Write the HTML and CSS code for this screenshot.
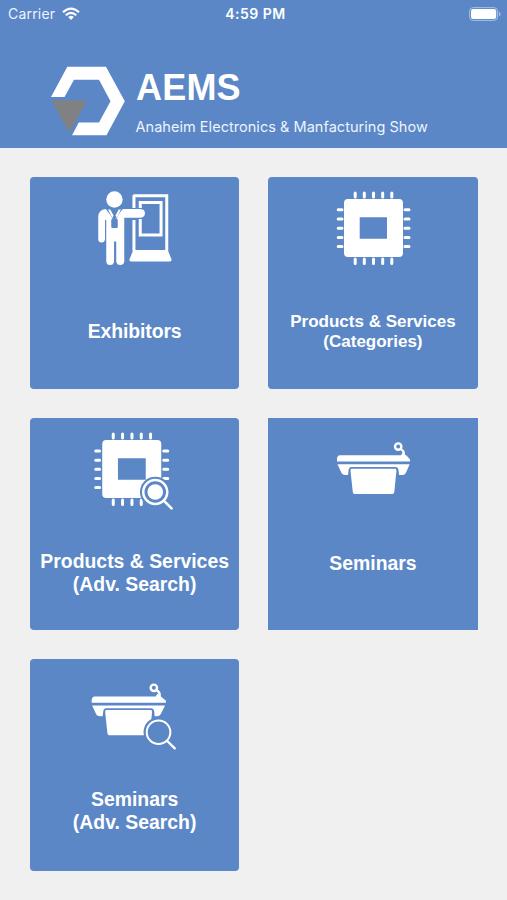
FILE: index.html
```html
<!DOCTYPE html>
<html lang="en">
<head>
<meta charset="utf-8">
<title>AEMS</title>
<link rel="stylesheet" href="styles.css">
</head>
<body>
<header class="header">
  <div class="status">
    <div class="carrier"><span>Carrier</span>
      <svg class="wifi" width="18" height="14" viewBox="0 0 18 14"><g fill="none" stroke="#fff" stroke-width="2.2"><path d="M1 5.2Q9-2 17 5.2"/><path d="M3.8 8.2Q9 3.5 14.2 8.2"/></g><path d="M9 12.9 6.2 9.9Q9 7.7 11.8 9.9Z" fill="#fff"/></svg>
    </div>
    <div class="time">4:59 PM</div>
    <svg class="battery" width="32" height="14" viewBox="0 0 32 14"><rect x=".6" y=".6" width="28" height="12.8" rx="3.6" fill="none" stroke="#a9c0e3" stroke-width="1"/><rect x="2" y="2" width="25.2" height="10" rx="2.2" fill="#fff"/><path d="M30 4.7Q31.6 5.2 31.6 7T30 9.3Z" fill="#a9c0e3"/></svg>
  </div>
  <div class="brand">
    <svg class="logo" width="76" height="72" viewBox="50 65 76 72"><path d="M51 97 67.3 66.8H106L124.8 101.3 106.5 135.3H72L78.8 122.5H99L110.5 101.3 99 79.7H74L64.5 97Z" fill="#fff"/><path d="M51.7 100.3H87L69.3 133Z" fill="#808183"/></svg>
    <div class="titles">
      <h1>AEMS</h1>
      <p>Anaheim Electronics &amp; Manfacturing Show</p>
    </div>
  </div>
</header>
<main class="grid">
  <a class="tile">
    <svg class="icon" viewBox="-.25 2 100 98">
      <g fill="none" stroke="#fff">
        <path d="M48.7 33V21Q48.7 20.7 49 20.7H81.5V76M48.7 45V76" stroke-width="3"/>
        <path d="M55 33V27.5H75.8V60H55V44" stroke-width="3"/>
      </g>
      <path d="M48 75H82.5L86.3 84.5Q86.5 86.5 84.5 86.5H46Q43.8 86.5 44.2 84.5Z" fill="#fff"/>
      <circle cx="29.2" cy="24.5" r="8.2" fill="#fff"/>
      <path d="M20.5 34 29 45 37.5 34H55.5Q59.7 34.5 59.7 38.3T55.5 42.7H39V86.5Q38.5 90 35 90T31 86.5V66.5H28.8V86.5Q28.3 90 24.8 90T21 86.5V45H19.8V64Q19.5 67.5 16.3 67.5T13 64V42Q13 34.8 20.5 34Z" fill="#fff"/>
      <path d="M22.7 32.8 28 44M35.7 32.8 30.5 44" fill="none" stroke="#5b87c6" stroke-width="1.4"/>
      <path d="M24.5 33.5H34L29.3 42Z" fill="#5b87c6"/>
      <path d="M25 34.5 28.3 40.5 27 43 22.8 34.5ZM33.5 34.5 30.2 40.5 31.5 43 35.7 34.5Z" fill="#fff"/>
      <rect x="26" y="44" width="6.5" height="9" rx="1" fill="#5b87c6"/>
    </svg>
    <span class="label exhibitors">Exhibitors</span>
  </a>
  <a class="tile">
    <svg class="icon" viewBox="-2 2 100 98">
      <path d="M30.2 18V22M39.3 18V22M48.5 18V22M57.7 18V22M66.8 18V22M30.2 84V88.5M39.3 84V88.5M48.5 84V88.5M57.7 84V88.5M66.8 84V88.5M13.2 34.8H17M13.2 44H17M13.2 53.2H17M13.2 62.4H17M13.2 71.5H17M80 34.8H84M80 44H84M80 53.2H84M80 62.4H84M80 71.5H84" stroke="#fff" stroke-width="3" stroke-linecap="round"/>
      <path fill="#fff" fill-rule="evenodd" d="M23 24H74Q78 24 78 28V78Q78 82 74 82H23Q19 82 19 78V28Q19 24 23 24ZM34.7 42.3V63.8H62V42.3Z"/>
    </svg>
    <span class="label small">Products &amp; Services<br>(Categories)</span>
  </a>
  <a class="tile">
    <svg class="icon" viewBox="-.25 -2 100 98">
      <path d="M28 14V18M37.3 14V18M46.7 14V18M56 14V18M65.3 14V18M28 80V84.5M37.3 80V84.5M46.7 80V84.5M56 80V84.5M10.5 31H14.3M10.5 40.2H14.3M10.5 49.3H14.3M10.5 58.4H14.3M10.5 67.5H14.3M78.5 31H82.5M78.5 40.2H82.5M78.5 49.3H82.5M78.5 58.4H82.5" stroke="#fff" stroke-width="3" stroke-linecap="round"/>
      <path fill="#fff" fill-rule="evenodd" d="M21 20H72Q76 20 76 24V74Q76 78 72 78H21Q17 78 17 74V24Q17 20 21 20ZM32.7 38.3V59.8H60.5V38.3Z"/>
      <circle cx="70" cy="72" r="15.3" fill="#5b87c6"/>
      <circle cx="70" cy="72" r="12" fill="#5b87c6" stroke="#fff" stroke-width="2.5"/>
      <circle cx="70" cy="72" r="7.8" fill="#fff"/>
      <path d="M78.8 80.8 86.3 88.4" stroke="#fff" stroke-width="2.6" stroke-linecap="round"/>
    </svg>
    <span class="label adv-products">Products &amp; Services<br>(Adv. Search)</span>
  </a>
  <a class="tile square">
    <svg class="icon" viewBox="-2 -12 100 98">
      <path d="M15 25.2H76L78 22.3 80.5 25.2H81.3L85 29.5V31.5H12V28.5Q12.5 25.3 15 25.2ZM12.5 34.3H84.7L80.8 43Q80 45 77.5 45H74L73.5 40Q73 37 70.5 37H26.5Q24 37 23.6 40L23 45H20.2Q17.5 45 16.5 43ZM26.3 38.8H70.5Q71.5 39 71.4 41L69.3 62Q69 64 67.3 64H29.5Q28 64 27.8 62L25.5 41Q25.4 39 26.3 38.8Z" fill="#fff"/>
      <circle cx="73.2" cy="16.6" r="3.2" fill="none" stroke="#fff" stroke-width="2.4"/>
      <path d="M75.5 19Q79.5 20.5 78.8 25.8" fill="none" stroke="#fff" stroke-width="2.4"/>
    </svg>
    <span class="label seminars">Seminars</span>
  </a>
  <a class="tile">
    <svg class="icon" viewBox="4.75 -11 100 98">
      <g transform="translate(-.6 1.2)"><path d="M15 25.2H76L78 22.3 80.5 25.2H81.3L86.3 29.5V31.5H12V28.5Q12.5 25.3 15 25.2ZM12.5 34.3H85.5L81 43Q80 45 77.5 45H75L74.5 40Q74 37 71.5 37H26.5Q24 37 23.6 40L23 45H20.2Q17.5 45 16.5 43ZM26.3 38.8H71.5Q72.5 39 72.4 41L70.3 62Q70 64 68.3 64H29.5Q28 64 27.8 62L25.5 41Q25.4 39 26.3 38.8Z" fill="#fff"/>
      <circle cx="74.2" cy="16.6" r="3.2" fill="none" stroke="#fff" stroke-width="2.4"/>
      <path d="M76.5 19Q80.8 20.5 80 25.8" fill="none" stroke="#fff" stroke-width="2.4"/></g>
      <circle cx="78.3" cy="62.2" r="15" fill="#5b87c6"/>
      <circle cx="78.3" cy="62.2" r="11.8" fill="#5b87c6" stroke="#fff" stroke-width="2"/>
      <path d="M87 71 94.5 78.3" stroke="#fff" stroke-width="2.4" stroke-linecap="round"/>
    </svg>
    <span class="label adv-seminars">Seminars<br>(Adv. Search)</span>
  </a>
</main>
</body>
</html>
```
FILE: styles.css
```css
* { box-sizing: border-box; margin: 0; padding: 0; }
body {
  height: 900px;
  background: #f0f0f0;
  color: #fff;
  font-family: "Liberation Sans", Arial, sans-serif;
}
.header {
  height: 147.5px;
  background: #5b87c6;
  font-family: Inter, sans-serif;
}
.status {
  display: grid;
  grid-template-columns: 1fr auto 1fr;
  align-items: center;
  height: 27px;
  padding: 0 6px 0 8px;
  font-size: 14px;
  line-height: 17px;
}
.carrier { display: flex; align-items: center; gap: 7px; letter-spacing: .2px; color: #edf4ff; }
.wifi { display: block; }
.time { padding-left: 2px; font-weight: 600; letter-spacing: .5px; }
.battery { justify-self: end; }
.brand { display: flex; gap: 10px; padding: 38px 0 0 50px; }
.logo { flex: none; }
h1 {
  margin-top: 3px;
  font: bold 36px/40px "Liberation Sans", Arial, sans-serif;
  letter-spacing: .2px;
}
.titles p {
  margin: 10px 0 0 -.5px;
  font-size: 14.5px;
  line-height: 18px;
  letter-spacing: .04px;
  white-space: nowrap;
  color: #edf4ff;
}
.grid {
  display: grid;
  grid-template-columns: 209.3px 209.3px;
  grid-auto-rows: 211.5px;
  gap: 29.5px 29px;
  padding: 29.5px 0 0 30px;
}
.tile {
  display: flex;
  flex-direction: column;
  align-items: center;
  background: #5b87c6;
  border-radius: 4px;
}
.square { border-radius: 0; }
.icon { flex: none; width: 100px; height: 98px; }
.label {
  display: flex;
  flex-direction: column;
  justify-content: center;
  height: 46px;
  margin-top: 33px;
  font-size: 19.4px;
  font-weight: bold;
  line-height: 23px;
  text-align: center;
  white-space: nowrap;
}
.exhibitors { letter-spacing: -.1px; }
.small { margin-top: 34px; font-size: 17px; line-height: 20.5px; }
.adv-products { margin-top: 34px; }
.seminars { margin-top: 24px; }
.adv-seminars { margin-top: 31px; }
```
